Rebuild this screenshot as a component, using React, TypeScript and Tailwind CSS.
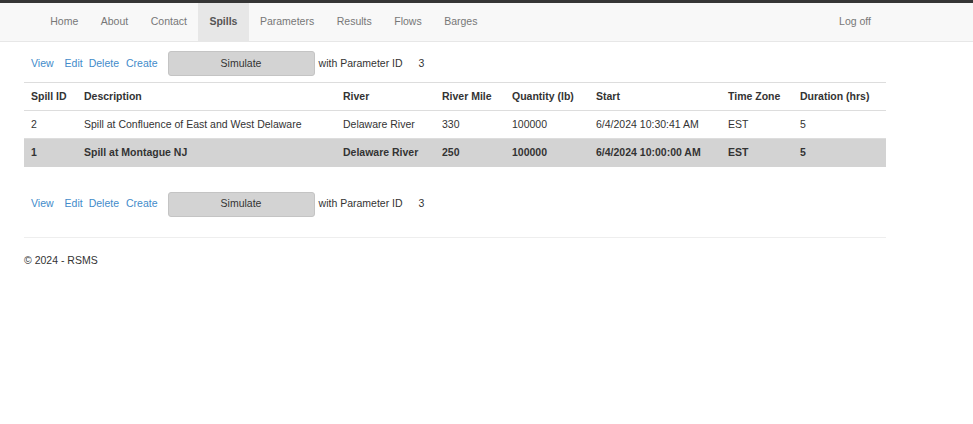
const navItems = ['Home', 'About', 'Contact', 'Spills', 'Parameters', 'Results', 'Flows', 'Barges'];

const columns = [
  { label: 'Spill ID', w: 'w-[53px]' },
  { label: 'Description', w: 'w-[259px]' },
  { label: 'River', w: 'w-[99px]' },
  { label: 'River Mile', w: 'w-[70px]' },
  { label: 'Quantity (lb)', w: 'w-[84px]' },
  { label: 'Start', w: 'w-[132px]' },
  { label: 'Time Zone', w: 'w-[72px]' },
  { label: 'Duration (hrs)', w: 'w-[93px]' },
];

const spills = [
  {
    id: '2',
    description: 'Spill at Confluence of East and West Delaware',
    river: 'Delaware River',
    mile: '330',
    quantity: '100000',
    start: '6/4/2024 10:30:41 AM',
    tz: 'EST',
    duration: '5',
    selected: false,
  },
  {
    id: '1',
    description: 'Spill at Montague NJ',
    river: 'Delaware River',
    mile: '250',
    quantity: '100000',
    start: '6/4/2024 10:00:00 AM',
    tz: 'EST',
    duration: '5',
    selected: true,
  },
];

function ActionBar() {
  return (
    <div className="flex items-center h-[25px] text-[10.5px]">
      <a className="ml-[7px] text-[#428bca]">View</a>
      <a className="ml-[11px] text-[#428bca]">Edit</a>
      <a className="ml-[6px] text-[#428bca]">Delete</a>
      <a className="ml-[7px] text-[#428bca]">Create</a>
      <button className="ml-[10px] w-[147px] h-[25px] bg-[#d3d3d3] border border-[#c4c4c4] rounded-[3px] text-[#333]">
        Simulate
      </button>
      <span className="ml-[4px] text-[#333]">with Parameter ID</span>
      <span className="ml-[16px] text-[#333]">3</span>
    </div>
  );
}

export default function App() {
  return (
    <div className="min-h-[424px] bg-white text-[#333] font-['Liberation_Sans',Arial,sans-serif] text-[10.5px]">
      {/* Navbar */}
      <div className="border-t-[3px] border-[#363636] bg-[#f8f8f8] border-b border-b-[#e7e7e7]">
        <div className="flex h-[38px] w-[862px] ml-[24px] pl-[15px]">
          <ul className="flex">
            {navItems.map((item) => (
              <li
                key={item}
                className={
                  item === 'Spills'
                    ? 'flex items-center px-[11.25px] bg-[#e7e7e7] font-bold text-[#555]'
                    : 'flex items-center px-[11.25px] text-[#777]'
                }
              >
                {item}
              </li>
            ))}
          </ul>
          <div className="ml-auto flex items-center pr-[15px] text-[#777]">Log off</div>
        </div>
      </div>

      <div className="w-[862px] ml-[24px]">
        <div className="mt-[9px]">
          <ActionBar />
        </div>

        <table className="mt-[6px] w-[862px] border-collapse table-fixed">
          <thead>
            <tr className="h-[28px] border-t border-[#ddd] border-b-[1.5px] border-b-[#ddd]">
              {columns.map((c) => (
                <th key={c.label} className={`${c.w} text-left font-bold px-[7px] align-middle`}>
                  {c.label}
                </th>
              ))}
            </tr>
          </thead>
          <tbody>
            {spills.map((s) => (
              <tr
                key={s.id}
                className={
                  s.selected
                    ? 'h-[28px] bg-[#d3d3d3] font-bold border-t border-[#ddd]'
                    : 'h-[28px] border-t border-[#ddd]'
                }
              >
                <td className="px-[7px]">{s.id}</td>
                <td className="px-[7px]">{s.description}</td>
                <td className="px-[7px]">{s.river}</td>
                <td className="px-[7px]">{s.mile}</td>
                <td className="px-[7px]">{s.quantity}</td>
                <td className="px-[7px]">{s.start}</td>
                <td className="px-[7px]">{s.tz}</td>
                <td className="px-[7px]">{s.duration}</td>
              </tr>
            ))}
          </tbody>
        </table>

        <div className="mt-[25px]">
          <ActionBar />
        </div>

        <hr className="mt-[20px] border-t border-[#eee]" />

        <footer className="mt-[15px] text-[10.5px]">© 2024 - RSMS</footer>
      </div>
    </div>
  );
}
